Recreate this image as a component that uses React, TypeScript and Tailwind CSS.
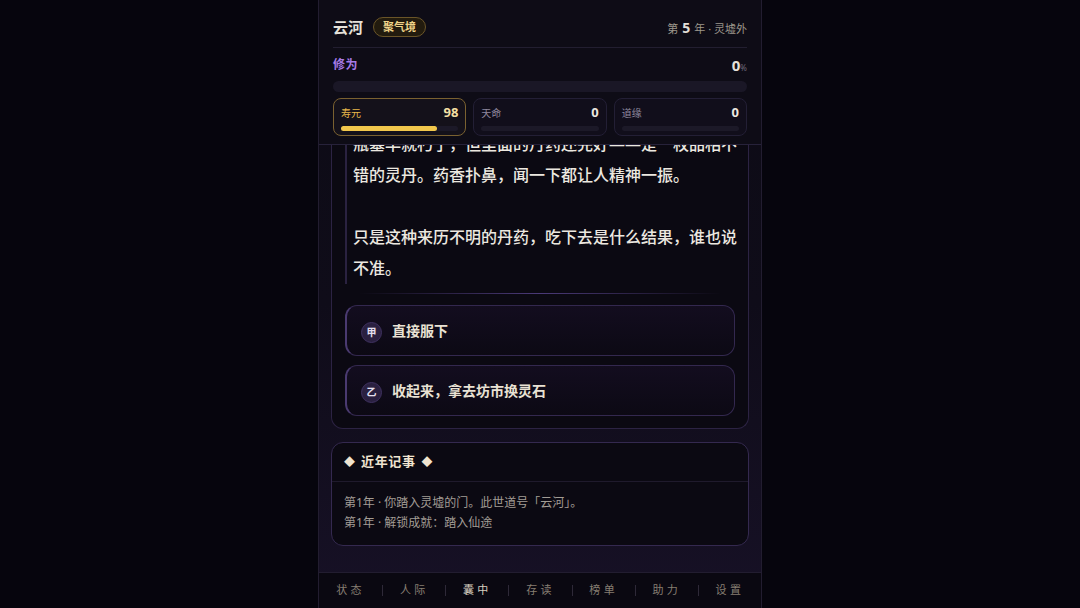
const stats = [
  { label: "寿元", value: 98, pct: 82, active: true },
  { label: "天命", value: 0, pct: 0, active: false },
  { label: "道缘", value: 0, pct: 0, active: false },
]

const options = [
  { mark: "甲", text: "直接服下" },
  { mark: "乙", text: "收起来，拿去坊市换灵石" },
]

const records = [
  "第1年 · 你踏入灵墟的门。此世道号「云河」。",
  "第1年 · 解锁成就：踏入仙途",
]

const tabs = ["状态", "人际", "囊中", "存读", "榜单", "助力", "设置"]

function StatCard({ label, value, pct, active }: { label: string; value: number; pct: number; active: boolean }) {
  return (
    <div
      className={
        active
          ? "flex-1 h-[38px] rounded-lg border border-[#7a6130] bg-[#14111a] px-[7px] pt-[5px]"
          : "flex-1 h-[38px] rounded-lg border border-[#231f35] bg-[#110e1b] px-[7px] pt-[5px]"
      }
    >
      <div className="flex items-center justify-between h-[17px] leading-none">
        <span className={active ? "text-[10px] text-[#e8b84a]" : "text-[10px] text-[#8f889e]"}>{label}</span>
        <span className={active ? "text-[13px] font-bold text-[#f3dfa2]" : "text-[13px] font-bold text-[#ece8e0]"}>{value}</span>
      </div>
      <div className="mt-[5px] h-[5px] rounded-full bg-[#1c1928]">
        <div className="h-full rounded-full bg-[#f2c74c]" style={{ width: `${pct}%` }} />
      </div>
    </div>
  )
}

export default function App() {
  return (
    <div className="min-h-[608px] bg-[#06050d] flex justify-center font-['Noto_Sans','Noto_Sans_CJK_SC',sans-serif]">
      <div className="w-[444px] h-[608px] flex flex-col border-x border-[#221d30] bg-gradient-to-b from-[#0d0b15] via-[#0f0c19] to-[#171126]">
        {/* Header */}
        <header className="h-[145px] shrink-0 bg-[#0e0c16] border-b border-[#27223a] px-[14px] pt-[16px] relative z-10">
          <div className="flex items-center justify-between h-[22px]">
            <div className="flex items-center gap-[10px]">
              <span className="text-[15px] font-bold text-[#e6e2da]">云河</span>
              <span className="h-[20px] px-[9px] rounded-full border border-[#6a5528] bg-[#221b0e] text-[11px] font-bold text-[#f0d58a] flex items-center">
                聚气境
              </span>
            </div>
            <div className="text-[11px] text-[#9d978c] flex items-baseline">
              第<span className="text-[14px] font-bold text-[#e2ded6] mx-[4px]">5</span>年 · 灵墟外
            </div>
          </div>
          <div className="mt-[9px] border-t border-[#221e30]" />
          <div className="mt-[8px] flex items-center justify-between h-[18px]">
            <span className="text-[12px] font-bold text-[#a77be8] tracking-[0.05em]">修为</span>
            <span className="flex items-baseline">
              <span className="text-[15px] font-bold text-[#e6e2da]">0</span>
              <span className="text-[8px] text-[#6e6878]">%</span>
            </span>
          </div>
          <div className="mt-[7px] h-[11px] rounded-full bg-[#1a1726]" />
          <div className="mt-[6px] flex gap-[7px]">
            {stats.map((s) => (
              <StatCard key={s.label} {...s} />
            ))}
          </div>
        </header>

        {/* Scroll body */}
        <main className="flex-1 overflow-hidden px-[12px]">
          <div className="-mt-[16px]">
            <section className="rounded-b-xl border-x border-b border-[#2c2343] bg-[#0b0912] pl-[13px] pr-[13px] pb-[12px]">
              <div className="border-l-2 border-[#2a2240] pl-[6px] mr-[-7px] text-[16px] leading-[31px] font-medium text-[#ece8e0] space-y-[31px]">
                <p>瓶塞早就朽了，但里面的丹药还完好——是一枚品相不错的灵丹。药香扑鼻，闻一下都让人精神一振。</p>
                <p>只是这种来历不明的丹药，吃下去是什么结果，谁也说不准。</p>
              </div>
              <div className="mt-[9px] mx-[14px] h-px bg-gradient-to-r from-transparent via-[#4b3a78] to-transparent" />
              <div className="mt-[11px] flex flex-col gap-[9px]">
                {options.map((o) => (
                  <div
                    key={o.mark}
                    className="h-[51px] rounded-xl border border-[#33284f] border-l-2 border-l-[#4a3a70] bg-gradient-to-b from-[#130d1f] to-[#0c0914] flex items-center pl-[14px] gap-[10px]"
                  >
                    <span className="w-[21px] h-[21px] mt-[4px] rounded-full bg-[#2a2040] border border-[#3f3160] text-[10px] font-bold text-[#e6e0f0] flex items-center justify-center">
                      {o.mark}
                    </span>
                    <span className="text-[14px] font-bold text-[#e9e2d4]">{o.text}</span>
                  </div>
                ))}
              </div>
            </section>

            <section className="mt-[13px] rounded-xl border border-[#34294f] bg-[#0b0912]">
              <div className="h-[39px] border-b border-[#1f1a2c] flex items-center px-[12px] gap-[6px] text-[13px] font-bold text-[#f0e4d0]">
                <span className="text-[11px]">◆</span>
                <span className="tracking-[0.05em]">近年记事</span>
                <span className="text-[11px]">◆</span>
              </div>
              <div className="px-[12px] pt-[11px] pb-[12px] text-[12px] leading-[20px] text-[#a29c95]">
                {records.map((r) => (
                  <p key={r}>{r}</p>
                ))}
              </div>
            </section>
          </div>
        </main>

        {/* Bottom nav */}
        <nav className="h-[36px] shrink-0 border-t border-[#221d30] bg-[#0a0811] flex items-center">
          {tabs.map((t, i) => (
            <div key={t} className="flex-1 flex items-center">
              {i > 0 && <span className="w-px h-[11px] bg-[#2e2938]" />}
              <span
                className={
                  t === "囊中"
                    ? "flex-1 text-center text-[11px] tracking-[0.3em] text-[#d8cfc0]"
                    : "flex-1 text-center text-[11px] tracking-[0.3em] text-[#867e72]"
                }
              >
                {t}
              </span>
            </div>
          ))}
        </nav>
      </div>
    </div>
  )
}
